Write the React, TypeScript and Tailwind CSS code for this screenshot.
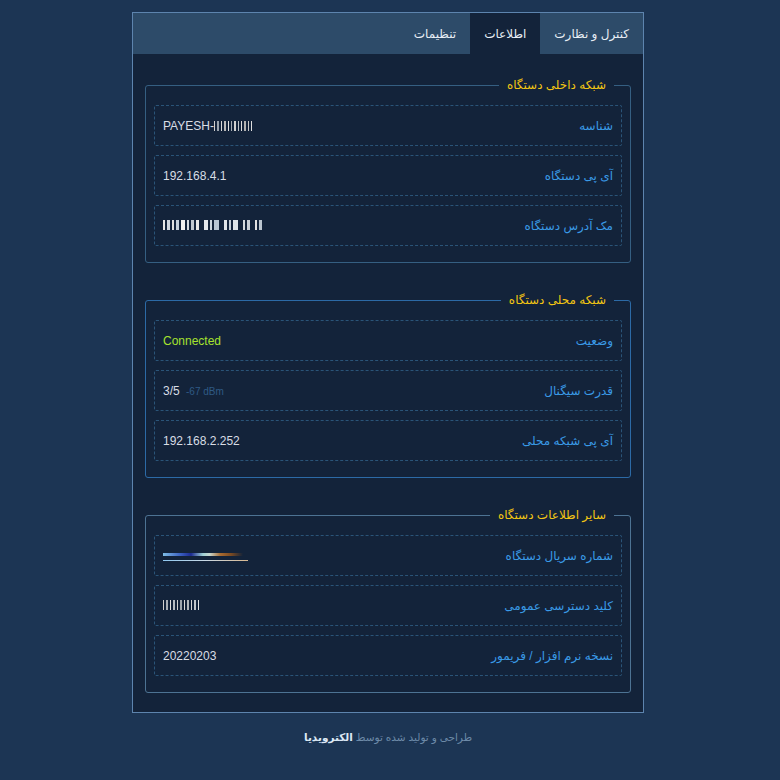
import React from 'react';

type Bar = [number, string];

const FONT = { fontFamily: '"Liberation Sans", "DejaVu Sans", sans-serif' };

// masked values are drawn as thin bars, like the censored screenshot
const payeshBars: Bar[] = [
  [1, '#cfcfcf'], [2, '#9aa3ad'], [1, '#d7d7d7'], [2, '#b8b8b8'], [1, '#e0e0e0'], [1, '#a6adb5'],
  [2, '#d0d0d0'], [1, '#bfc4c9'], [1, '#dcdcdc'], [2, '#b0b0b0'], [1, '#c8c8c8'], [1, '#dedede'],
];

const macBars: Bar[] = [
  [2, '#e6e6e6'], [3, '#cfd6de'], [2, '#e0e0e0'], [3, '#c6d0da'], [4, '#f0f0f0'], [2, '#d5dbe1'],
  [3, '#c0c8d0'], [3, '#e8e8e8'], [0, ''], [4, '#e4e8ec'], [2, '#cdd6df'], [5, '#b9c6d4'],
  [0, ''], [3, '#e0e4e8'], [2, '#c3ccd6'], [5, '#dde3e8'], [0, ''], [2, '#d4d9de'], [3, '#c9d0d7'],
  [0, ''], [2, '#e1e1e1'], [3, '#bcc6d0'],
];

const keyBars: Bar[] = [
  [1, '#d0d0d0'], [2, '#a8aeb5'], [1, '#e0e0e0'], [2, '#b5bcc3'], [1, '#cfcfcf'], [2, '#9ea6ae'],
  [1, '#dadada'], [2, '#b0b6bc'], [1, '#d4d4d4'], [2, '#c0c5ca'], [1, '#e2e2e2'],
];

function Bars({ bars, gap = 2 }: { bars: Bar[]; gap?: number }) {
  return (
    <span className="inline-flex items-center h-[10px]" dir="ltr">
      {bars.map(([w, c], i) =>
        w === 0 ? (
          <span key={i} className="inline-block w-[3px]" />
        ) : (
          <span
            key={i}
            className="inline-block h-[10px]"
            style={{ width: w, background: c, marginRight: gap }}
          />
        )
      )}
    </span>
  );
}

function Serial() {
  return (
    <span className="flex flex-col gap-[4px] w-[85px] mt-[2px]" dir="ltr">
      <span className="block h-[3px] w-[80px] bg-[linear-gradient(to_right,#7fbde6_0%,#3a5fc0_22%,#1c2a90_35%,#9fd0d4_50%,#c8d8d0_58%,#a86a30_72%,#7a4a22_85%,#13233a_100%)]" />
      <span className="block h-px w-[85px] bg-[linear-gradient(to_right,#8fc8f0,#c9d9e6_50%,#d8b890)]" />
    </span>
  );
}

interface Row {
  label: string;
  value: React.ReactNode;
}

function InfoRow({ label, value }: Row) {
  return (
    <div className="flex items-center justify-between h-[41px] px-2 border border-dashed border-[#2a5478] rounded-[2px]">
      <span className="text-[#3a9ae6]">{label}</span>
      <span className="text-[#d8dde5]" dir="ltr">{value}</span>
    </div>
  );
}

function Section({ title, border, rows }: { title: string; border: string; rows: Row[] }) {
  return (
    <fieldset className={`border rounded-[3px] px-2 pb-4 ${border}`}>
      <legend className="px-[8px] mr-[8px] text-[#f2c513] leading-[16px]">{title}</legend>
      <div className="flex flex-col gap-[9px] pt-[12px]">
        {rows.map((r) => (
          <InfoRow key={r.label} {...r} />
        ))}
      </div>
    </fieldset>
  );
}

export default function App() {
  const tabs = [
    { label: 'کنترل و نظارت', active: false },
    { label: 'اطلاعات', active: true },
    { label: 'تنظیمات', active: false },
  ];

  return (
    <div className="min-h-screen bg-[#1c3554] text-[12px] pt-3 pr-1" style={FONT} dir="rtl">
      <div className="w-[512px] mx-auto border border-[#5d84ae] bg-[#13233a]">
        <div className="flex bg-[#2d4b69] h-[41px]">
          {tabs.map((t) => (
            <div
              key={t.label}
              className={`flex items-center px-[14px] text-[#e8eef5] ${t.active ? 'bg-[#13233a]' : ''}`}
            >
              {t.label}
            </div>
          ))}
        </div>

        <div className="flex flex-col gap-[29px] px-3 pt-[23px] pb-[19px]">
          <Section
            title="شبکه داخلی دستگاه"
            border="border-[#355f82]"
            rows={[
              {
                label: 'شناسه',
                value: (
                  <span className="inline-flex items-center">
                    PAYESH-
                    <Bars bars={payeshBars} />
                  </span>
                ),
              },
              { label: 'آی پی دستگاه', value: '192.168.4.1' },
              { label: 'مک آدرس دستگاه', value: <Bars bars={macBars} gap={2} /> },
            ]}
          />

          <Section
            title="شبکه محلی دستگاه"
            border="border-[#2c6aa6]"
            rows={[
              { label: 'وضعیت', value: <span className="text-[#a6e22e]">Connected</span> },
              {
                label: 'قدرت سیگنال',
                value: (
                  <span>
                    3/5 <span className="ml-[3px] text-[10px] text-[#2f5a85]">-67 dBm</span>
                  </span>
                ),
              },
              { label: 'آی پی شبکه محلی', value: '192.168.2.252' },
            ]}
          />

          <Section
            title="سایر اطلاعات دستگاه"
            border="border-[#4d7393]"
            rows={[
              { label: 'شماره سریال دستگاه', value: <Serial /> },
              { label: 'کلید دسترسی عمومی', value: <Bars bars={keyBars} gap={2} /> },
              { label: 'نسخه نرم افزار / فریمور', value: '20220203' },
            ]}
          />
        </div>
      </div>

      <footer className="mt-[17px] text-center text-[10.5px] text-[#6d8aa8]">
        طراحی و تولید شده توسط <span className="font-bold text-[#dce8f5]">الکترویدیا</span>
      </footer>
    </div>
  );
}
